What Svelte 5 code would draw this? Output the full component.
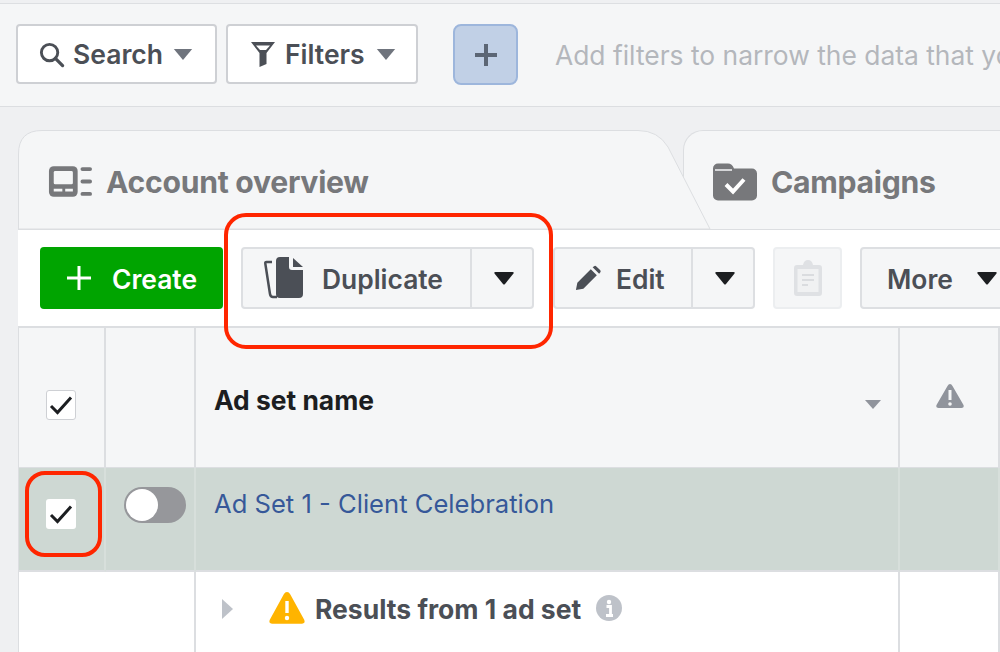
<script>
  const caret = "M0 0h16l-8 9z";
</script>

<main class="page">
  <header class="search-bar">
    <button class="filter search">
      <svg width="27" height="27" viewBox="0 0 28 28"><circle cx="12" cy="12" r="8.500" fill="none" stroke="#4b4f56" stroke-width="3"/><path d="M18 18l7.500 7.500" stroke="#4b4f56" stroke-width="3.400" stroke-linecap="round"/></svg>
      <span>Search</span>
      <svg class="c" width="20" height="11" viewBox="0 0 20 12"><path d="M0 0h20l-10 12z" fill="#6f747d"/></svg>
    </button>
    <button class="filter filters">
      <svg width="26" height="28" viewBox="0 0 26 28"><path d="M1 2h24l-8.500 11v11l-7 3v-14z" fill="#4b4f56"/><path d="M6 5.500h14l-4 4.500h-6z" fill="#fff"/></svg>
      <span>Filters</span>
      <svg class="c" width="20" height="11" viewBox="0 0 20 12"><path d="M0 0h20l-10 12z" fill="#6f747d"/></svg>
    </button>
    <button class="add">
      <svg width="24" height="24" viewBox="0 0 24 24"><path d="M12 1v22M1 12h22" stroke="#5c6675" stroke-width="4"/></svg>
    </button>
    <span class="hint">Add filters to narrow the data that you see</span>
  </header>

  <section class="content">
    <div class="tabs">
      <div class="tab first">
        <svg class="tab-shape" width="694" height="99" viewBox="0 0 694 99"><path d="M0.500 99V24Q0.500 0.500 24 0.500H620Q640 0.500 650 17L692 99Z" fill="#f5f6f7" stroke="#dcdee1"/></svg>
        <svg class="tab-icon" width="44" height="33" viewBox="0 0 46 34"><rect x="1" y="1" width="30" height="32" rx="5" fill="#77787b"/><rect x="6" y="6" width="20" height="14" rx="1.500" fill="#f5f6f7"/><path d="M6 26h9M18 26h8" stroke="#f5f6f7" stroke-width="3"/><path d="M36 4h8M36 17h8M36 30h8" stroke="#77787b" stroke-width="4" stroke-linecap="round"/></svg>
        <span>Account overview</span>
      </div>
      <div class="tab second">
        <svg class="tab-icon" width="44" height="39" viewBox="0 0 44 38"><path d="M0 6a5 5 0 0 1 5-5h10q4 0 6 5h18a5 5 0 0 1 5 5v22a5 5 0 0 1-5 5H5a5 5 0 0 1-5-5z" fill="#77787b"/><path d="M2 7.500h17" stroke="#f5f6f7" stroke-width="1.500"/><path d="M13 22l7 7 11-12" fill="none" stroke="#fff" stroke-width="4"/></svg>
        <span>Campaigns</span>
      </div>
    </div>

    <div class="toolbar">
      <button class="create">
        <svg width="26" height="26" viewBox="0 0 26 26"><path d="M13 1v24M1 13h24" stroke="#fff" stroke-width="3"/></svg>
        <span>Create</span>
      </button>
      <div class="split duplicate">
        <button class="main">
          <svg width="44" height="42" viewBox="0 0 44 42"><path d="M9 5H3.500q-1.500 0-1.200 1.500L7 37q.5 3 3 3h4" fill="none" stroke="#4b4f56" stroke-width="2.500"/><path d="M13 4a4 4 0 0 1 4-4h9v10a3 3 0 0 0 3 3h11v24a4 4 0 0 1-4 4H17a4 4 0 0 1-4-4z" fill="#4b4f56"/><path d="M30 1l10 9H30z" fill="#4b4f56"/></svg>
          <span>Duplicate</span>
        </button>
        <button class="arrow"><svg width="20" height="13" viewBox="0 0 20 13"><path d="M1.500 0h17q2 0 .8 1.800L11 12q-1 1-2 0L.7 1.800Q-.5 0 1.500 0z" fill="#1c1e21"/></svg></button>
      </div>
      <div class="split edit">
        <button class="main">
          <svg width="26" height="26" viewBox="0 0 28 28"><path d="M1 27l1.500-8L17 4.500l6.500 6.500L9 25.500zM19 2.500l2-1.500q1-.5 2 .5l4 4q1 1 .5 2L26 9.500z" fill="#4b4f56"/></svg>
          <span>Edit</span>
        </button>
        <button class="arrow"><svg width="20" height="13" viewBox="0 0 20 13"><path d="M1.500 0h17q2 0 .8 1.800L11 12q-1 1-2 0L.7 1.800Q-.5 0 1.500 0z" fill="#1c1e21"/></svg></button>
      </div>
      <button class="paste" aria-label="Paste">
        <svg width="28" height="36" viewBox="0 0 28 36"><path d="M3 5h6q1-5 5-5t5 5h6a3 3 0 0 1 3 3v25a3 3 0 0 1-3 3H3a3 3 0 0 1-3-3V8a3 3 0 0 1 3-3z" fill="#dfe1e4"/><rect x="3.500" y="9" width="21" height="23" fill="#f0f1f2"/><path d="M8 15h12M8 20h12M8 25h6" stroke="#dadcdf" stroke-width="2"/></svg>
      </button>
      <button class="more">
        <span>More</span>
        <svg width="20" height="13" viewBox="0 0 20 13"><path d="M1.500 0h17q2 0 .8 1.800L11 12q-1 1-2 0L.7 1.800Q-.5 0 1.500 0z" fill="#1c1e21"/></svg>
      </button>
    </div>

    <div class="table">
      <div class="cell head check-cell"><span class="check outlined"><svg width="24" height="20" viewBox="0 0 24 20"><path d="M2 11l6.500 6.500L22 2.500" fill="none" stroke="#1c1e21" stroke-width="3"/></svg></span></div>
      <div class="cell head"></div>
      <div class="cell head name-head">
        <strong>Ad set name</strong>
        <svg width="16" height="9" viewBox="0 0 16 9"><path d={caret} fill="#90949c"/></svg>
      </div>
      <div class="cell head warn-head">
        <svg width="28" height="24" viewBox="0 0 28 24"><path d="M14 0q1.500 0 2.500 2l11 19q1 3-2 3h-23q-3 0-2-3l11-19q1-2 2.500-2z" fill="#90949c"/><path d="M14 6v10" stroke="#f5f6f7" stroke-width="3"/><circle cx="14" cy="20" r="1.800" fill="#f5f6f7"/></svg>
      </div>
      <div class="cell head"></div>

      <div class="cell row check-cell selected-check"><span class="check"><svg width="24" height="20" viewBox="0 0 24 20"><path d="M2 11l6.500 6.500L22 2.500" fill="none" stroke="#1c1e21" stroke-width="3"/></svg></span></div>
      <div class="cell row toggle-cell"><span class="toggle"><span class="knob"></span></span></div>
      <div class="cell row"><span class="link">Ad Set 1 - Client Celebration</span></div>
      <div class="cell row"></div>
      <div class="cell row"></div>

      <div class="cell plain"></div>
      <div class="cell plain"></div>
      <div class="cell plain result">
        <svg class="tri" width="11" height="20" viewBox="0 0 11 20"><path d="M0 0l11 10L0 20z" fill="#bec2c9"/></svg>
        <svg class="warn" width="36" height="32" viewBox="0 0 36 32"><path d="M18 0q2 0 3.200 2.200l14 25.500q1.500 4-2.500 4H3.300q-4 0-2.500-4l14-25.500Q16 0 18 0z" fill="#ffb400"/><path d="M18 9v12" stroke="#fff" stroke-width="3.400"/><circle cx="18" cy="26" r="2.200" fill="#fff"/></svg>
        <strong>Results from 1 ad set</strong>
        <svg class="info" width="26" height="26" viewBox="0 0 26 26"><circle cx="13" cy="13" r="13" fill="#bec2c9"/><circle cx="13" cy="7" r="2.200" fill="#fff"/><path d="M10.500 11.500h4V20M10 20.500h7" fill="none" stroke="#fff" stroke-width="2.800"/></svg>
      </div>
      <div class="cell plain"></div>
      <div class="cell plain"></div>
    </div>
  </section>

  <div class="mark mark-duplicate"></div>
  <div class="mark mark-check"></div>
</main>

<style>
  :global(body) {
    margin: 0;
    background: #eff0f2;
  }
  .page {
    position: relative;
    width: 1000px;
    height: 652px;
    overflow: hidden;
    background: #eff0f2;
    font-family: Inter, "Liberation Sans", sans-serif;
    color: #4b4f56;
  }
  button {
    font: inherit;
    color: inherit;
    padding: 0;
    margin: 0;
    display: flex;
    align-items: center;
  }
  svg {
    display: block;
    flex: none;
  }

  /* search bar */
  .search-bar {
    height: 104px;
    margin-top: 3px;
    border-top: 1px solid #dddfe2;
    border-bottom: 1px solid #dcdee1;
    background: #f5f6f7;
    box-sizing: border-box;
    display: flex;
    align-items: flex-start;
    padding: 20px 0 0 16px;
    white-space: nowrap;
  }
  .filter {
    height: 60px;
    flex: none;
    box-sizing: border-box;
    background: #fff;
    border: 2px solid #ced0d4;
    border-radius: 4px;
    font-size: 26.500px;
    font-weight: 600;
  }
  .search {
    width: 201px;
    padding-left: 20px;
    gap: 8px;
  }
  .filters {
    width: 192px;
    margin-left: 9px;
    padding-left: 22px;
    gap: 9px;
  }
  .filter .c {
    margin-left: 2px;
  }
  .add {
    width: 65px;
    height: 61px;
    margin-left: 35px;
    justify-content: center;
    background: #c1d0e6;
    border: 2px solid #9db6dc;
    border-radius: 8px;
    box-sizing: border-box;
    flex: none;
  }
  .hint {
    margin-left: 37px;
    line-height: 62px;
    font-size: 26.400px;
    color: #b4b7bc;
    flex: none;
  }

  /* tabs */
  .content {
    margin: 23px 0 0 18px;
  }
  .tabs {
    display: flex;
    height: 99px;
  }
  .tab {
    position: relative;
    display: flex;
    align-items: center;
    font-size: 30.200px;
    font-weight: 700;
    color: #77787b;
    box-sizing: border-box;
    white-space: nowrap;
  }
  .tab span {
    position: relative;
    letter-spacing: -0.3px;
  }
  .tab-icon {
    position: relative;
  }
  .first {
    width: 694px;
    padding: 4px 0 0 30px;
    gap: 14px;
    z-index: 1;
  }
  .tab-shape {
    position: absolute;
    left: 0;
    top: 0;
  }
  .second {
    margin-left: -29px;
    flex: 1;
    padding: 3px 0 0 29px;
    gap: 14px;
    background: #f5f6f7;
    border: 1px solid #dcdee1;
    border-width: 1px 0 0 1px;
    border-top-left-radius: 20px;
  }

  /* toolbar */
  .toolbar {
    height: 99px;
    box-sizing: border-box;
    background: #fff;
    border-top: 1px solid #dcdee1;
    border-bottom: 2px solid #dcdee1;
    padding: 17px 0 0 22px;
    display: flex;
    align-items: flex-start;
    white-space: nowrap;
  }
  .toolbar button span {
    padding-top: 2px;
  }
  .create {
    width: 183px;
    height: 62px;
    flex: none;
    box-sizing: border-box;
    background: #00a400;
    border: none;
    border-radius: 4px;
    color: #fff;
    font-size: 26.400px;
    font-weight: 600;
    padding-left: 26px;
    gap: 20px;
  }
  .split {
    display: flex;
    flex: none;
    height: 62px;
    box-sizing: border-box;
    background: #f5f6f7;
    border: 2px solid #dddfe2;
    border-radius: 4px;
    font-size: 26.400px;
    font-weight: 600;
  }
  .split button {
    background: none;
    border: none;
  }
  .split .arrow {
    justify-content: center;
    flex: 1;
    padding-left: 3px;
    border-left: 2px solid #dddfe2;
  }
  .duplicate {
    width: 293px;
    margin-left: 18px;
  }
  .duplicate .main {
    width: 227px;
    padding-left: 20px;
    gap: 15px;
  }
  .edit {
    width: 202px;
    margin-left: 19px;
  }
  .edit .main {
    width: 136px;
    padding-left: 20px;
    gap: 15px;
  }
  .paste {
    width: 69px;
    height: 62px;
    margin-left: 18px;
    flex: none;
    justify-content: center;
    box-sizing: border-box;
    background: #f5f6f7;
    border: 2px solid #eceef0;
    border-radius: 4px;
  }
  .more {
    width: 150px;
    height: 62px;
    margin-left: 18px;
    flex: none;
    box-sizing: border-box;
    background: #f5f6f7;
    border: 2px solid #dddfe2;
    border-radius: 4px;
    padding-left: 25px;
    gap: 24px;
    font-size: 26.400px;
    font-weight: 600;
  }

  /* table */
  .table {
    display: grid;
    grid-template-columns: 87px 90px 704px 100px 1fr;
    grid-template-rows: 140px 104px 90px;
    border-left: 1px solid #dcdee1;
  }
  .cell {
    box-sizing: border-box;
    border-right: 2px solid #dcdee1;
  }
  .head {
    background: #f5f6f7;
    border-bottom: 1px solid #dcdee1;
  }
  .row {
    background: #ced8d3;
    border-right-color: #d7dfdb;
    border-bottom: 2px solid #dcdee1;
    padding: 20px 0 0 18px;
    font-size: 25px;
  }
  .plain {
    background: #fff;
  }
  .cell:nth-child(11) {
    border-right-color: #fff;
  }
  .check-cell {
    display: flex;
    justify-content: center;
    padding-top: 62px;
    padding-right: 1px;
  }
  .check-cell.row {
    padding: 31px 1px 0 0;
  }
  .check {
    width: 30px;
    height: 30px;
    box-sizing: border-box;
    background: #fff;
    border-radius: 3px;
    display: flex;
    align-items: center;
    justify-content: center;
  }
  .check.outlined {
    border: 1.500px solid #ced0d4;
  }
  .toggle-cell {
    padding: 19px 0 0 18px;
  }
  .toggle {
    display: block;
    width: 62px;
    height: 36px;
    border-radius: 18px;
    background: #96979b;
    padding: 2px;
    box-sizing: border-box;
  }
  .knob {
    display: block;
    width: 32px;
    height: 32px;
    border-radius: 50%;
    background: #fff;
  }
  .link {
    color: #365899;
    font-size: 25.600px;
    line-height: 32px;
    white-space: nowrap;
  }
  .name-head {
    display: flex;
    align-items: flex-start;
    justify-content: space-between;
    padding: 56px 17px 0 18px;
    color: #1c1e21;
    font-size: 26.400px;
  }
  .name-head svg {
    margin-top: 16px;
  }
  .warn-head {
    padding: 56px 0 0 36px;
  }
  .result {
    position: relative;
    display: flex;
    align-items: flex-start;
    padding: 20px 0 0 26px;
    font-size: 26.500px;
    white-space: nowrap;
  }
  .result .tri {
    margin-top: 7px;
  }
  .result .warn {
    margin-left: 36px;
  }
  .result strong {
    margin-left: 10px;
    line-height: 34px;
  }
  .result .info {
    margin-left: 15px;
    margin-top: 3px;
  }

  /* red annotations drawn on top of the screenshot */
  .mark {
    position: absolute;
    box-sizing: border-box;
    border: 4px solid #ff2600;
    z-index: 5;
  }
  .mark-duplicate {
    left: 224px;
    top: 213px;
    width: 329px;
    height: 136px;
    border-radius: 22px;
  }
  .mark-check {
    left: 25px;
    top: 471px;
    width: 77px;
    height: 86px;
    border-radius: 20px;
  }
</style>
